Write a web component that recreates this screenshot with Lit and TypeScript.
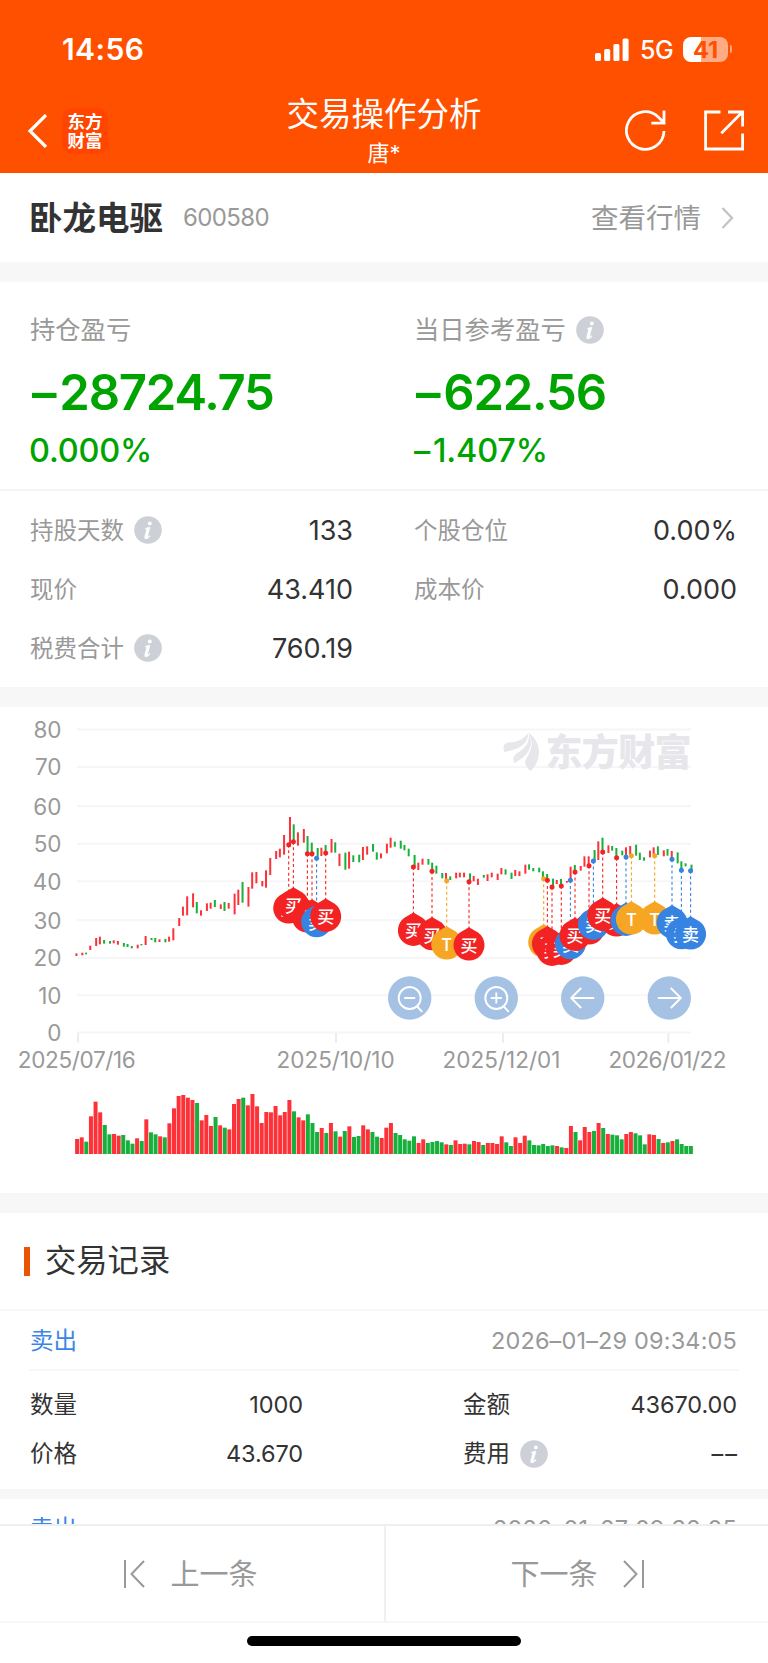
import { LitElement, html, svg, css } from "lit";
import { customElement, property } from "lit/decorators.js";

const RED = "#fc3238";
const GREEN = "#17b03c";
const BUY = "#f42323";
const SELL = "#3683e1";
const BOTH = "#f6a623";

const PITCH = 4.615;
const COLORS =
  "RRGRRRGGRRGGGRGRGGRGRRRRRRGRRRGRGRRRGRRRRRRRRRRGRRGGGRGRGRGRGGRRGGRRRGGGGGRRGGGGRGRRRGRRGRRRRGGRRRGGGGGGRGRRGRRRGRGRGGGRRGGGRRGRGRGGGG";

// Volume bar heights, in thirds of a pixel
const VOLUME = [
  45, 50, 37, 113, 157, 125, 87, 59, 60, 55, 57, 41, 31, 47, 39, 104, 65, 59, 53, 50, 92, 137, 174, 177, 169, 162,
  153, 101, 117, 84, 111, 86, 79, 74, 150, 165, 169, 146, 180, 143, 93, 126, 125, 144, 116, 126, 162, 128, 110, 101,
  119, 93, 66, 78, 63, 93, 68, 52, 69, 83, 51, 54, 86, 74, 66, 52, 48, 79, 93, 63, 57, 44, 40, 53, 33, 44, 33, 36,
  39, 35, 29, 27, 41, 30, 31, 29, 39, 36, 27, 33, 33, 30, 53, 35, 24, 50, 33, 55, 41, 27, 26, 30, 24, 26, 24, 20,
  18, 84, 66, 41, 81, 66, 69, 93, 78, 60, 58, 56, 44, 60, 66, 62, 56, 29, 59, 57, 45, 33, 35, 39, 44, 30, 24, 24,
];

// Daily range as [high, low], in thirds of a pixel from the chart's top
const RANGE = [
  [760, 768], [758, 766], [758, 763], [737, 750], [714, 738], [710, 733], [720, 731], [723, 731], [721, 730],
  [723, 734], [729, 740], [732, 741], [738, 745], [734, 745], [732, 736], [708, 735], [714, 720], [714, 727],
  [718, 726], [717, 727], [710, 725], [685, 721], [654, 678], [620, 647], [589, 646], [580, 622], [606, 640],
  [631, 647], [610, 633], [608, 626], [600, 621], [613, 627], [606, 633], [609, 626], [581, 643], [569, 615],
  [546, 608], [561, 620], [517, 566], [516, 550], [543, 559], [511, 563], [474, 525], [453, 477], [446, 472],
  [405, 464], [351, 440], [373, 420], [397, 437], [387, 428], [408, 465], [428, 465], [444, 470], [443, 468],
  [435, 460], [417, 458], [427, 458], [461, 498], [458, 509], [455, 506], [466, 486], [464, 487], [441, 480],
  [439, 464], [432, 455], [457, 479], [460, 475], [431, 460], [413, 443], [425, 440], [422, 446], [435, 451],
  [446, 469], [465, 500], [488, 510], [476, 494], [477, 494], [488, 512], [497, 521], [519, 535], [519, 540],
  [529, 540], [518, 535], [518, 532], [518, 532], [520, 545], [528, 544], [536, 555], [525, 533], [523, 543],
  [518, 532], [521, 540], [504, 523], [508, 524], [518, 537], [510, 528], [514, 528], [494, 521], [493, 509],
  [504, 514], [503, 517], [514, 535], [522, 540], [536, 560], [540, 552], [537, 558], [543, 548], [500, 540],
  [495, 515], [498, 512], [469, 500], [469, 500], [450, 485], [424, 480], [413, 455], [436, 459], [438, 452],
  [444, 470], [452, 466], [442, 470], [438, 465], [434, 467], [458, 480], [472, 482], [452, 472], [442, 463],
  [439, 465], [451, 469], [447, 467], [453, 480], [457, 490], [484, 508], [490, 499], [494, 512],
];

type Kind = "买" | "卖" | "T";
const TRADES: [number, number, Kind][] = [
  [288.7, 434, "买"], [293.4, 425, "买"], [307.4, 461, "买"], [312, 461, "买"], [316.6, 475, "卖"],
  [325.7, 459, "买"], [413.4, 501, "买"], [432, 514, "买"], [446.7, 542, "T"], [469, 545, "买"],
  [543.7, 536, "T"], [547.4, 541, "买"], [552, 561, "买"], [561.3, 558, "买"], [570.4, 541, "卖"],
  [589, 497, "买"], [575, 516, "买"], [593.4, 483, "卖"], [616.6, 473, "买"], [602.7, 456, "买"],
  [626, 471, "卖"], [654.7, 467, "T"], [631.4, 467, "T"], [672, 478, "卖"], [681.4, 511, "卖"], [690.6, 512, "卖"],
];
const KIND_COLOR: Record<Kind, string> = { 买: BUY, 卖: SELL, T: BOTH };

const GRID: [number, string][] = [
  [29.5, "80"], [67, "70"], [106.3, "60"], [143.7, "50"], [181.3, "40"], [220.3, "30"], [258, "20"], [295.2, "10"], [332.5, "0"],
];
const DATES: [number, number, string][] = [
  [78, 76.8, "2025/07/16"], [336, 335.6, "2025/10/10"], [503, 501.5, "2025/12/01"], [668.3, 667.5, "2026/01/22"],
];

@customElement("info-dot")
export class InfoDot extends LitElement {
  static styles = css`
    :host { display: block; width: 28px; height: 28px; }
    svg { display: block; }
  `;
  render() {
    return html`<svg width="28" height="28" viewBox="0 0 28 28">
      <circle cx="14" cy="14" r="13.8" fill="#cdd0d7" />
      <circle cx="15.8" cy="7.4" r="1.9" fill="#fff" />
      <path d="M11.4 12.300l3.400-1.100h1.300l-2.500 9q-.1 1.200 2.200-.7l.5.500q-2 2.900-4.200 2.900-1.900 0-1.500-2l1.900-7.200q.1-.7-1.100-.7z" fill="#fff" stroke="#fff" stroke-width=".4" />
    </svg>`;
  }
}

@customElement("trade-chart")
export class TradeChart extends LitElement {
  static styles = css`
    :host { display: block; height: 486px; }
    svg { display: block; }
    .axis { font: 375 22.5px Inter, sans-serif; fill: #999; }
    .pin { font: 500 17px "Noto Sans CJK SC", sans-serif; fill: #fff; text-anchor: middle; }
    .mark { font: 900 37px "Noto Sans CJK SC", sans-serif; fill: #e6e6eb; }
  `;

  private pin([x, third, kind]: [number, number, Kind]) {
    const y = third / 3;
    const c = KIND_COLOR[kind];
    return svg`
      <path d="M${x} ${y + 45.6}l9 5.2a15.5 15.5 0 1 1-18 0z" fill=${c} />
      <text class="pin" x=${x} y=${y + 70.2}>${kind}</text>`;
  }

  private control(x: number, icon: unknown) {
    return svg`<g transform="translate(${x} 298)" fill="none" stroke="#fff" stroke-width="1.9">
      <circle r="21.7" fill="#a5c2e5" stroke="none" />${icon}</g>`;
  }

  render() {
    const lens = svg`<circle r="11" /><path d="M7.5 8.5l5 5.3M-5.5 0h11" />`;
    return html`<svg width="768" height="486" viewBox="0 7 768 486">
      ${GRID.map(
        ([y, label]) => svg`
          <path d="M77 ${y}H691" stroke="#f6f6f6" stroke-width="2" />
          <text class="axis" x="61.5" y=${y + 8.3} text-anchor="end">${label}</text>`
      )}
      ${DATES.map(
        ([tick, x, label]) => svg`
          <path d="M${tick} 333v9.5" stroke="#ececec" stroke-width="2" />
          <text class="axis" x=${x} y="368" text-anchor="middle" textLength="118">${label}</text>`
      )}
      <g fill="#e6e6eb">
        <path d="M504 52c-1-7 0-9 5-9.500 9-.5 14-3 19.500-9.500-1 11-8 16-24.500 19z" />
        <path d="M514.500 63c-3-6 0-8 5-11.500 7-5 10-9.500 9.500-18.500 5 14 0 22-14.500 30z" />
        <path d="M530.500 71c-7-7-6.500-9-2.500-15.500 4.500-8 5-14 1-22.500 13 10 13 27 1.500 38z" />
        <text class="mark" x="545.500" y="66" textLength="146">东方财富</text>
      </g>
      ${RANGE.map(([hi, lo], i) => {
        const x = 75.4 + i * PITCH + [0, 1.3, 0.4][i % 3];
        return svg`<rect x=${x} y=${hi / 3} width="2" height=${(lo - hi) / 3} fill=${COLORS[i] === "R" ? RED : GREEN} />`;
      })}
      ${TRADES.map(
        ([x, y, k]) => svg`
          <path d="M${x} ${y / 3}v47" stroke=${KIND_COLOR[k]} stroke-width="1.1" stroke-dasharray="3 2.6" />
          <circle cx=${x} cy=${y / 3} r="2.5" fill=${KIND_COLOR[k]} />`
      )}
      ${TRADES.map((t) => this.pin(t))}
      ${this.control(409.7, lens)}
      ${this.control(496.3, svg`${lens}<path d="M0-5.5v11" />`)}
      ${this.control(582.7, svg`<path d="M11.5 0h-23M-1.5-10l-10 10 10 10" />`)}
      ${this.control(669.3, svg`<path d="M-11.5 0h23M1.5-10l10 10-10 10" />`)}
      ${VOLUME.map(
        (v, i) => svg`<rect x=${75.1 + i * PITCH} y=${454 - v / 3} width="4" height=${v / 3} fill=${COLORS[i] === "R" ? RED : GREEN} />`
      )}
    </svg>`;
  }
}

@customElement("record-card")
export class RecordCard extends LitElement {
  @property() side = "";
  @property() time = "";
  @property({ attribute: false }) cells: string[] = [];
  static styles = css`
    :host { display: block; background: #fff; font-size: 23.5px; color: #333; }
    .head { height: 56px; margin: 0 29px; padding: 2px 2px 0 1px; display: flex; justify-content: space-between;
      align-items: center; border-bottom: 2px solid #f8f8f8; }
    .side { color: #3a86e8; }
    .time { color: #999; font-size: 23.5px; font-weight: 375; letter-spacing: 0.15px; }
    .grid { display: grid; grid-template-columns: 273px 274px; column-gap: 160px; grid-auto-rows: 49px;
      padding: 10px 31px 10px 30px; height: 98px; }
    .cell { display: flex; align-items: center; }
    .val { margin-left: auto; font-weight: 380; letter-spacing: -0.1px; }
    .none { letter-spacing: 2px; margin-right: -2px; }
    info-dot { margin-left: 10px; margin-bottom: 1px; }
  `;
  render() {
    const names = ["数量", "金额", "价格", "费用"];
    return html`
      <div class="head"><span class="side">${this.side}</span><span class="time">${this.time}</span></div>
      <div class="grid">
        ${names.map(
          (n, i) => html`<div class="cell">${n}${i === 3 ? html`<info-dot></info-dot>` : ""}<span class="val ${this.cells[i] === "––" ? "none" : ""}">${this.cells[i]}</span></div>`
        )}
      </div>`;
  }
}

@customElement("app-root")
export class AppRoot extends LitElement {
  static styles = css`
    :host { display: flex; flex-direction: column; width: 768px; height: 1663px; overflow: hidden; background: #fff;
      font-family: Inter, "Noto Sans CJK SC", sans-serif; color: #333; box-sizing: border-box; line-height: 1.2; }
    svg { display: block; }
    header { background: #ff5000; color: #fff; height: 173px; flex: none; }
    .status { height: 98px; display: flex; align-items: center; padding: 0 37px 0 62px; box-sizing: border-box; }
    .clock { font-size: 30px; font-weight: 600; margin-right: auto; letter-spacing: 0.4px; }
    .net { font-size: 25px; font-weight: 450; margin: 2px 10px 0 11px; letter-spacing: -0.6px; }
    .battery { width: 45px; height: 25px; border-radius: 8px; font-size: 23.5px; font-weight: 700; line-height: 25px;
      text-align: center; color: #ff5000; background: linear-gradient(90deg, #fff 41%, #ffab84 41%); }
    .nub { width: 2px; height: 8px; background: #ffab84; border-radius: 0 2px 2px 0; margin-left: 2px; margin-right: -1px; }
    .nav { height: 75px; display: grid; grid-template-columns: 200px 1fr 200px; }
    .left { display: flex; align-items: center; padding: 0 0 10px 27px; }
    .logo { width: 46px; height: 46px; border-radius: 10px; background: #ff4500; margin-left: 14px; box-sizing: border-box;
      padding-top: 3px; font: 700 17.5px/19px "Noto Sans CJK SC", sans-serif; text-align: center; }
    .logo span { display: block; }
    .middle { text-align: center; }
    .title { font-size: 32.5px; line-height: 34px; }
    .owner { font-size: 22px; line-height: 26px; margin-top: 8px; }
    .right { display: flex; align-items: center; justify-content: flex-end; gap: 38px; padding: 0 23px 11px 0; }
    .stock { height: 89px; flex: none; display: flex; align-items: center; padding: 2px 34px 0 30px; box-sizing: border-box; }
    .stock svg { margin-bottom: 2px; }
    .name { font-size: 33.5px; font-weight: 600; margin-left: -1px; }
    .code { font-size: 24px; font-weight: 375; color: #999; margin-left: 20px; letter-spacing: -0.6px; }
    .quote { font-size: 27.5px; color: #999; margin-left: auto; margin-right: 20px; }
    .band { height: 20px; background: #f7f7f7; flex: none; }
    .totals { height: 209px; flex: none; display: grid; grid-template-columns: 384px 354px; padding-left: 30px;
      border-bottom: 2px solid #f5f5f5; box-sizing: border-box; }
    .label { height: 28px; margin-top: 34px; display: flex; align-items: center; gap: 10px; font-size: 25.3px; color: #999; }
    .big { color: #00a400; font-size: 49px; font-weight: 580; line-height: 56px; margin: 21px 0 0 2px; letter-spacing: -1.2px; }
    .big span { margin-right: 4px; }
    .pct { color: #00a400; font-size: 32.5px; font-weight: 500; line-height: 40px; margin: 10px 0 0 -1px; letter-spacing: -0.2px; }
    .pct span { margin: 0 3px 0 1px; }
    .facts { height: 196px; flex: none; display: grid; grid-template-columns: 322px 322px; column-gap: 62px;
      grid-auto-rows: 59px; padding: 11px 0 0 30px; box-sizing: border-box; }
    .fact { display: flex; align-items: center; font-size: 23.5px; color: #999; }
    .fact info-dot { margin: 0 0 3px 10px; }
    .fact b { font-weight: 380; font-size: 27px; color: #333; margin-left: auto; margin-right: -1px; }
    .section { height: 98px; flex: none; box-sizing: border-box; border-bottom: 2px solid #f8f8f8; padding-left: 24px; display: flex; align-items: center;
      gap: 15px; font-size: 31.3px; }
    .section span { padding-top: 2px; }
    .section i { width: 6px; height: 29px; background: #ea5504; }
    .list { flex: 1; min-height: 0; overflow: hidden; }
    .gap { height: 10px; background: #f7f7f7; }
    .pager { height: 99px; flex: none; display: grid; grid-template-columns: 1fr 1fr; border-top: 2px solid #efefef;
      border-bottom: 2px solid #f7f7f7; box-sizing: border-box; font-size: 29px; color: #999; background: #fff; }
    .step { display: flex; align-items: center; justify-content: center; gap: 25px; padding-right: 2px; }
    .step span { padding-top: 3px; }
    .step + .step { border-left: 2px solid #f0f0f0; padding-right: 0; }
    .home { height: 40px; flex: none; display: flex; justify-content: center; padding-top: 13px; box-sizing: border-box; }
    .home i { width: 274px; height: 10px; border-radius: 5px; background: #000; }
  `;

  private fact(name: string, value: string, info = false) {
    return html`<div class="fact">${name}${info ? html`<info-dot></info-dot>` : ""}<b>${value}</b></div>`;
  }

  render() {
    return html`
      <header>
        <div class="status">
          <span class="clock">14:56</span>
          <svg width="34" height="23" viewBox="0 0 34 23" fill="#fff">
            <rect x="0" y="15" width="6" height="8" rx="1.6" /><rect x="9.2" y="11" width="6" height="12" rx="1.6" />
            <rect x="18.4" y="6" width="6" height="17" rx="1.6" /><rect x="27.6" y="0.5" width="6" height="22.5" rx="1.6" />
          </svg>
          <span class="net">5G</span>
          <span class="battery">41</span><span class="nub"></span>
        </div>
        <div class="nav">
          <div class="left">
            <svg width="21" height="34" viewBox="0 0 21 34" fill="none" stroke="#fff" stroke-width="3.2"><path d="M19 1L3 17l16 16" /></svg>
            <div class="logo"><span>东方</span><span>财富</span></div>
          </div>
          <div class="middle"><div class="title">交易操作分析</div><div class="owner">唐*</div></div>
          <div class="right">
            <svg width="41" height="41" viewBox="0 0 41 41" fill="none" stroke="#fff" stroke-width="2.8">
              <path d="M39 21A18.8 18.8 0 1 1 33.300 7L38.600 12.500M39 .5v12.700H26.300" />
            </svg>
            <svg width="41" height="41" viewBox="0 0 41 41" fill="none" stroke="#fff" stroke-width="2.8">
              <path d="M16.500 2H1.600v37h37V23.500M24 2h14.600v14.500M38.200 2.300L17.300 23.200" />
            </svg>
          </div>
        </div>
      </header>
      <div class="stock">
        <span class="name">卧龙电驱</span><span class="code">600580</span><span class="quote">查看行情</span>
        <svg width="13" height="22" viewBox="0 0 13 22" fill="none" stroke="#c4c4c4" stroke-width="2.4"><path d="M1.5 1l9.5 10-9.5 10" /></svg>
      </div>
      <div class="band"></div>
      <div class="totals">
        <div><div class="label">持仓盈亏</div><div class="big"><span>–</span>28724.75</div><div class="pct">0.000%</div></div>
        <div><div class="label">当日参考盈亏<info-dot></info-dot></div><div class="big"><span>–</span>622.56</div><div class="pct"><span>–</span>1.407%</div></div>
      </div>
      <div class="facts">
        ${this.fact("持股天数", "133", true)}${this.fact("个股仓位", "0.00%")}
        ${this.fact("现价", "43.410")}${this.fact("成本价", "0.000")}
        ${this.fact("税费合计", "760.19", true)}
      </div>
      <div class="band"></div>
      <trade-chart></trade-chart>
      <div class="band"></div>
      <div class="section"><i></i><span>交易记录</span></div>
      <div class="list">
        <record-card side="卖出" time="2026–01–29 09:34:05" .cells=${["1000", "43670.00", "43.670", "––"]}></record-card>
        <div class="gap"></div>
        <record-card side="卖出" time="2026–01–27 09:32:05"></record-card>
      </div>
      <div class="pager">
        <div class="step">
          <svg width="21" height="28" viewBox="0 0 21 28" fill="none" stroke="#999" stroke-width="2"><path d="M1 0v28M20 1L7.5 14 20 27" /></svg><span>上一条</span>
        </div>
        <div class="step">
          <span>下一条</span><svg width="21" height="28" viewBox="0 0 21 28" fill="none" stroke="#999" stroke-width="2"><path d="M20 0v28M1 1l12.5 13L1 27" /></svg>
        </div>
      </div>
      <div class="home"><i></i></div>
    `;
  }
}
